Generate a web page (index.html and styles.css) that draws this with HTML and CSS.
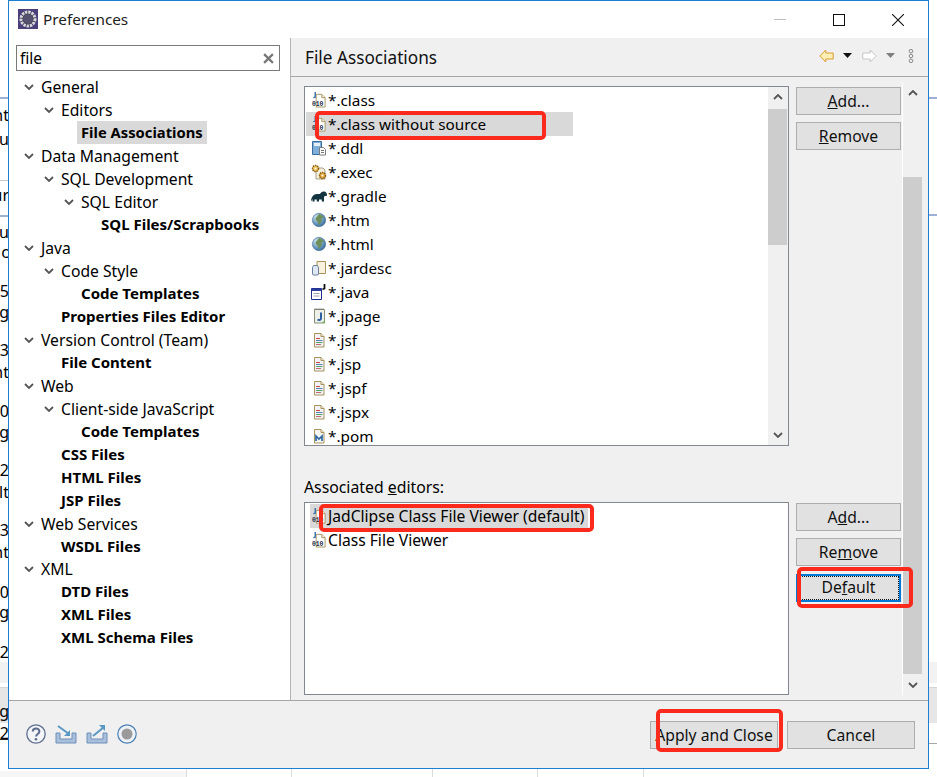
FILE: index.html
```html
<!DOCTYPE html>
<html lang="en">
<head>
<meta charset="utf-8">
<title>Preferences</title>
<link rel="stylesheet" href="styles.css">
</head>
<body>
<svg class="defs" width="0" height="0" aria-hidden="true">
  <defs>
    <radialGradient id="globe" cx="0.35" cy="0.3" r="0.8"><stop offset="0" stop-color="#dbe9f4"/><stop offset="0.55" stop-color="#6d9cc4"/><stop offset="1" stop-color="#35648f"/></radialGradient>
    <symbol id="chev-d" viewBox="0 0 10 6"><path d="M1 1l4 4 4-4" fill="none" stroke="#555" stroke-width="1.8"/></symbol>
    <symbol id="chev-u" viewBox="0 0 10 6"><path d="M1 5l4-4 4 4" fill="none" stroke="#555" stroke-width="1.8"/></symbol>
    <symbol id="i-class" viewBox="0 0 17 17">
      <path d="M5.500 2.500h6l3.500 3.500v10h-9.500z" fill="#fff" stroke="#a8935f"/><path d="M11.500 2.500v3.500h3.500" fill="#f3e9c8" stroke="#a8935f"/>
      <path d="M4.500 0v5.500l-2 .5" fill="none" stroke="#3a6ea8" stroke-width="1.500"/>
      <text class="ctext" x="1" y="14.500">010</text>
    </symbol>
    <symbol id="i-ddl" viewBox="0 0 16 16">
      <path d="M1.500 1.500h9v13h-9z" fill="#7fb0dc" stroke="#3b6d9c"/><rect x="3" y="3" width="6" height="3" fill="#e6f0f8"/>
      <path d="M8.500 7.500h4l2 2v5.500h-6z" fill="#fff" stroke="#7b7b7b"/><path d="M10 10.500h3M10 12.500h3" stroke="#777"/>
    </symbol>
    <symbol id="i-exec" viewBox="0 0 16 16">
      <path d="M5 4h7l2 2v9H5z" fill="#f5efd9" stroke="#a8a08a"/>
      <circle cx="4.500" cy="4.500" r="3" fill="#f1c55b" stroke="#8a5f12" stroke-width="1.500" stroke-dasharray="1.500 .7"/><circle cx="4.500" cy="4.500" r="1" fill="#fff"/>
      <circle cx="11.500" cy="11.500" r="3" fill="#e8aa3e" stroke="#8a5f12" stroke-width="1.500" stroke-dasharray="1.500 .7"/><circle cx="11.500" cy="11.500" r="1" fill="#fff"/>
    </symbol>
    <symbol id="i-gradle" viewBox="0 0 16 16"><path d="M0 13.500c0-4 2.500-7.500 6-7.500h3c.8-2 3-3 4.500-2.400 1.500.5 2.500 1.700 2.500 3.300 0 1-1 1.300-2 .8-.6.3-1 1-1 1.800v4h-2.200v-2H8v2H5.800v-2H3.500v2H1.500v-2.500c-.5.700-1 1.500-1.500 2.500z" fill="#12333f"/></symbol>
    <symbol id="i-globe" viewBox="0 0 16 16"><circle cx="8" cy="8" r="6.700" fill="url(#globe)" stroke="#4a7394" stroke-width=".6"/><path d="M8 2c2 .5 4 1.500 5 3.500-1 .5-2 .3-2.500 1.500-.3 1 1 2-.2 3-1 1-1.500 2.500-2.300 3-.7-1-.7-2.500-1.500-3.500-1-1-2-1.500-2-3C5 5 7 4 8 2z" fill="#6f8f5a"/></symbol>
    <symbol id="i-jar" viewBox="0 0 16 16"><path d="M6 1.500h8.500v12H6z" fill="#f7f1dd" stroke="#a8935f"/><path d="M1.500 8c0-1 .8-2 1-2.500h4c.2.500 1 1.500 1 2.500v6c0 .6-.5 1-1 1h-4c-.5 0-1-.4-1-1z" fill="#dfe8f4" stroke="#6b7f9c"/></symbol>
    <symbol id="i-java" viewBox="0 0 16 16"><path d="M.5 4.500h10v11H.5z" fill="#fff" stroke="#1d2c8c"/><rect x="1" y="4.500" width="9.500" height="2.500" fill="#2a3a9e"/><path d="M2.500 9.500h6M2.500 12h6" stroke="#9aa0b5"/><path d="M13.500 0v4.500l-2 1" fill="none" stroke="#111" stroke-width="1.800"/></symbol>
    <symbol id="i-jpage" viewBox="0 0 16 16"><path d="M3.500 1.500h10v13.500h-10z" fill="#eef1e9" stroke="#8a8f78"/><path d="M3.500 1h10" stroke="#555" stroke-dasharray="1 1"/><path d="M10 4.500v6c0 1.500-2 2-3.500 1" fill="none" stroke="#2f5fa0" stroke-width="2"/><path d="M11 15l3-3v3z" fill="#6eaa5a"/></symbol>
    <symbol id="i-jsf" viewBox="0 0 16 16"><path d="M3.500 1.500h6.500l3 3v10.500h-9.500z" fill="#f0f2f6" stroke="#a8935f"/><path d="M10 1.500v3h3" fill="#f3e9c8" stroke="#a8935f"/><path d="M5 6.500h4" stroke="#c44"/><path d="M5 8.500h6.500" stroke="#5a7fb5"/><path d="M5 10.500h6.500" stroke="#5aa06a"/><path d="M5 12.500h5" stroke="#c46a6a"/></symbol>
    <symbol id="i-pom" viewBox="0 0 16 16"><path d="M3.500 1.500h6.500l3 3v10.500h-9.500z" fill="#f6f6f2" stroke="#a8935f"/><path d="M10 1.500v3h3" fill="#f3e9c8" stroke="#a8935f"/><path d="M5 13V8l3 3 3-3v5" fill="none" stroke="#2e6aa8" stroke-width="1.700"/></symbol>
  </defs>
</svg>

<div class="desk">
  <div class="band-a"></div><div class="band-b"></div><div class="rule-l"></div><div class="rule-r"></div>
  <div class="hl hl-1"></div><div class="hl hl-2"></div><div class="hl hl-3"></div><div class="hl hl-4"></div><div class="hl hl-5"></div>
  <div class="foot-band"></div><div class="ticks"><i></i><i></i><i></i><i></i><i></i></div>
  <div class="frags">
    <span>nt</span><span>ou</span><span>ur</span><span>su</span><span>c</span><span>5</span><span>g</span><span>3</span><span>nt</span><span>0</span><span>ng</span><span>2</span><span>lt</span><span>3</span><span>nt</span><span>0</span><span>ng</span><span>2</span><span>g</span><span>2</span>
  </div>
</div>

<div class="dialog">
  <header class="titlebar">
    <svg class="app-icon" viewBox="0 0 20 20"><rect width="20" height="20" fill="#4a3f78"/><circle cx="10" cy="10" r="7" fill="#3a3a48" stroke="#d8d8dc" stroke-width="3" stroke-dasharray="2.400 .9"/><circle cx="10" cy="10" r="5" fill="#55506e"/></svg>
    <span class="title">Preferences</span>
    <div class="winbtns">
      <svg class="wb" viewBox="0 0 12 12"><path d="M0 5.500h12" stroke="#bdbdbd"/></svg>
      <svg class="wb" viewBox="0 0 12 12"><rect x=".5" y=".5" width="11" height="11" fill="none" stroke="#111"/></svg>
      <svg class="wb" viewBox="0 0 12 12"><path d="M0 0l12 12M12 0L0 12" stroke="#111" stroke-width="1.100"/></svg>
    </div>
  </header>

  <div class="main">
    <aside class="nav">
      <div class="filter">
        <span class="filter-text">file</span>
        <svg class="filter-x" viewBox="0 0 10 10"><path d="M1 1l8 8M9 1l-8 8" stroke="#777" stroke-width="2"/></svg>
      </div>
      <ul class="tree">
        <li class="l0"><svg class="tw"><use href="#chev-d"/></svg>General</li>
        <li class="l1"><svg class="tw"><use href="#chev-d"/></svg>Editors</li>
        <li class="l2 leaf"><b class="sel">File Associations</b></li>
        <li class="l0"><svg class="tw"><use href="#chev-d"/></svg>Data Management</li>
        <li class="l1"><svg class="tw"><use href="#chev-d"/></svg>SQL Development</li>
        <li class="l2"><svg class="tw"><use href="#chev-d"/></svg>SQL Editor</li>
        <li class="l3 leaf"><b>SQL Files/Scrapbooks</b></li>
        <li class="l0"><svg class="tw"><use href="#chev-d"/></svg>Java</li>
        <li class="l1"><svg class="tw"><use href="#chev-d"/></svg>Code Style</li>
        <li class="l2 leaf"><b>Code Templates</b></li>
        <li class="l1 leaf"><b>Properties Files Editor</b></li>
        <li class="l0"><svg class="tw"><use href="#chev-d"/></svg>Version Control (Team)</li>
        <li class="l1 leaf"><b>File Content</b></li>
        <li class="l0"><svg class="tw"><use href="#chev-d"/></svg>Web</li>
        <li class="l1"><svg class="tw"><use href="#chev-d"/></svg>Client-side JavaScript</li>
        <li class="l2 leaf"><b>Code Templates</b></li>
        <li class="l1 leaf"><b>CSS Files</b></li>
        <li class="l1 leaf"><b>HTML Files</b></li>
        <li class="l1 leaf"><b>JSP Files</b></li>
        <li class="l0"><svg class="tw"><use href="#chev-d"/></svg>Web Services</li>
        <li class="l1 leaf"><b>WSDL Files</b></li>
        <li class="l0"><svg class="tw"><use href="#chev-d"/></svg>XML</li>
        <li class="l1 leaf"><b>DTD Files</b></li>
        <li class="l1 leaf"><b>XML Files</b></li>
        <li class="l1 leaf"><b>XML Schema Files</b></li>
      </ul>
    </aside>

    <section class="page">
      <div class="page-head">
        <h1>File Associations</h1>
        <div class="nav-tools">
          <svg class="arrow" viewBox="0 0 15 14"><path d="M.8 7l6-6v3h7.400v6H6.800v3z" fill="#fdeeb5" stroke="#dc9a30"/></svg>
          <svg class="drop" viewBox="0 0 9 5"><path d="M0 0h9L4.500 5z" fill="#111"/></svg>
          <svg class="arrow" viewBox="0 0 15 14"><path d="M14.200 7l-6-6v3H.8v6h7.400v3z" fill="#fff" stroke="#c6c6c6"/></svg>
          <svg class="drop drop-g" viewBox="0 0 9 5"><path d="M0 0h9L4.500 5z" fill="#808080"/></svg>
          <svg class="dots" viewBox="0 0 6 14"><g fill="none" stroke="#888"><circle cx="3" cy="2.200" r="1.800"/><circle cx="3" cy="7" r="1.800"/><circle cx="3" cy="11.800" r="1.800"/></g></svg>
        </div>
      </div>

      <div class="page-body">
        <div class="pane">
          <div class="split">
            <div class="list list-top">
              <ul class="rows">
                <li><svg class="ic"><use href="#i-class"/></svg>*.class</li>
                <li class="on"><svg class="ic"><use href="#i-class"/></svg>*.class without source</li>
                <li><svg class="ic"><use href="#i-ddl"/></svg>*.ddl</li>
                <li><svg class="ic"><use href="#i-exec"/></svg>*.exec</li>
                <li><svg class="ic"><use href="#i-gradle"/></svg>*.gradle</li>
                <li><svg class="ic"><use href="#i-globe"/></svg>*.htm</li>
                <li><svg class="ic"><use href="#i-globe"/></svg>*.html</li>
                <li><svg class="ic"><use href="#i-jar"/></svg>*.jardesc</li>
                <li><svg class="ic"><use href="#i-java"/></svg>*.java</li>
                <li><svg class="ic"><use href="#i-jpage"/></svg>*.jpage</li>
                <li><svg class="ic"><use href="#i-jsf"/></svg>*.jsf</li>
                <li><svg class="ic"><use href="#i-jsf"/></svg>*.jsp</li>
                <li><svg class="ic"><use href="#i-jsf"/></svg>*.jspf</li>
                <li><svg class="ic"><use href="#i-jsf"/></svg>*.jspx</li>
                <li><svg class="ic"><use href="#i-pom"/></svg>*.pom</li>
              </ul>
              <div class="vbar vbar-list">
                <svg class="va"><use href="#chev-u"/></svg>
                <div class="track track-list"><div class="thumb thumb-list"></div></div>
                <svg class="va"><use href="#chev-d"/></svg>
              </div>
            </div>
            <div class="btns">
              <button class="btn"><u>A</u>dd...</button>
              <button class="btn"><u>R</u>emove</button>
            </div>
          </div>

          <div class="assoc-label">Associated <u>e</u>ditors:</div>

          <div class="split">
            <div class="list list-bot">
              <ul class="rows rows-bot">
                <li class="on"><svg class="ic"><use href="#i-class"/></svg>JadClipse Class File Viewer (default)</li>
                <li><svg class="ic"><use href="#i-class"/></svg>Class File Viewer</li>
              </ul>
            </div>
            <div class="btns btns-bot">
              <button class="btn">A<u>d</u>d...</button>
              <button class="btn">Re<u>m</u>ove</button>
              <button class="btn btn-focus"><span class="focus-in">De<u>f</u>ault</span></button>
            </div>
          </div>
        </div>

        <div class="vbar vbar-outer">
          <svg class="va"><use href="#chev-u"/></svg>
          <div class="track track-outer"><div class="thumb thumb-outer"></div></div>
          <svg class="va"><use href="#chev-d"/></svg>
        </div>
      </div>
    </section>
  </div>

  <footer class="foot">
    <div class="foot-icons">
      <svg class="fi fi-help" viewBox="0 0 20 20"><circle cx="10" cy="10" r="9.200" fill="#f4f5f8" stroke="#5d6d8e" stroke-width="1.300"/><path d="M6.800 7.500c0-4 6.600-4 6.600 0 0 2.500-3.300 2.500-3.300 5" fill="none" stroke="#5d6d8e" stroke-width="2"/><circle cx="10" cy="15.300" r="1.300" fill="#5d6d8e"/></svg>
      <svg class="fi fi-box" viewBox="0 0 22 20"><path d="M1 9h4v6h12V9h4v10H1z" fill="#a9c0dd" stroke="#6e8fb8"/><path d="M3 2l11 8" stroke="#5a98c4" stroke-width="2"/><path d="M9 12h6V6z" fill="#5a98c4"/></svg>
      <svg class="fi fi-box" viewBox="0 0 22 20"><path d="M1 9h4v6h12V9h4v10H1z" fill="#a9c0dd" stroke="#6e8fb8"/><path d="M7 12l11-9" stroke="#5a98c4" stroke-width="2"/><path d="M13 1h6v6z" fill="#5a98c4"/></svg>
      <svg class="fi fi-rec" viewBox="0 0 20 20"><circle cx="10" cy="10" r="9.200" fill="#eef2f8" stroke="#4a80b5" stroke-width="1.200"/><circle cx="10" cy="10" r="5.500" fill="#9a9a9a"/></svg>
    </div>
    <div class="foot-btns">
      <button class="btn btn-foot">Apply and Close</button>
      <button class="btn btn-foot">Cancel</button>
    </div>
  </footer>

  <div class="mark mark-1"></div>
  <div class="mark mark-2"></div>
  <div class="mark mark-3"></div>
  <div class="mark mark-4"></div>
</div>
</body>
</html>
```

FILE: styles.css
```css
* { box-sizing: border-box; }
html, body { margin: 0; padding: 0; }
body {
  position: relative;
  width: 937px;
  height: 777px;
  overflow: hidden;
  background: #fff;
  color: #000;
  font-family: "Noto Sans", "Open Sans", sans-serif;
  font-size: 15.300px;
}
.defs { position: absolute; }
ul { list-style: none; margin: 0; padding: 0; }
b { font-weight: 700; }
.ctext { font-family: "Liberation Mono", monospace; font-size: 6.800px; font-weight: 700; fill: #24304a; }

/* windows behind the dialog */
.desk { position: absolute; inset: 0; }
.desk > div { position: absolute; }
.hl { height: 2px; background: #9db1d6; }
.hl-1 { left: 0; width: 10px; top: 97px; }
.hl-2 { left: 0; width: 10px; top: 180px; height: 1px; background: #c8c8c8; }
.hl-3 { left: 0; width: 10px; top: 215px; }
.hl-4 { right: 0; width: 10px; top: 97px; }
.hl-5 { right: 0; width: 10px; top: 214px; }
.band-a { left: 0; right: 0; top: 662px; height: 21px; background: #f2f2f2; }
.band-b { left: 0; right: 0; top: 687px; height: 36px; background: #e6e6e6; border-top: 1px solid #d4d4d4; }
.rule-l { left: 0; width: 10px; top: 739px; height: 1px; background: #222; }
.rule-r { right: 0; width: 10px; top: 743px; height: 1px; background: #a8a8a8; }
.foot-band { left: 0; width: 186px; top: 771px; height: 6px; background: #f6f6f6; }
.ticks { left: 0; right: 0; top: 769px; height: 8px; }
.ticks i { position: absolute; top: 0; bottom: 0; width: 1px; background: #dcdcdc; }
.ticks i:nth-child(1) { left: 186px; }
.ticks i:nth-child(2) { left: 291px; }
.ticks i:nth-child(3) { left: 432px; }
.ticks i:nth-child(4) { left: 537px; }
.ticks i:nth-child(5) { left: 643px; }
.frags {
  left: 0; top: 0; width: 9px;
  display: grid;
  font-size: 16px;
  grid-template-columns: 9px;
  grid-template-rows: 125px 24px 56px 37px 20px 39px 21px 38px 22px 39px 21px 38px 22px 38px 22px 40px 20px 40px 59px 22px;
}
.frags span { display: flex; justify-content: flex-end; align-self: end; min-width: 0; height: 20px; line-height: 20px; white-space: nowrap; }

/* dialog */
.dialog {
  position: absolute;
  left: 8px; top: 0;
  width: 921px; height: 769px;
  display: flex;
  flex-direction: column;
  background: #fff;
  border: 1px solid #1b7fd6;
}
.titlebar { flex: none; height: 37px; display: flex; align-items: center; padding: 0 0 0 9px; }
.app-icon { width: 20px; height: 20px; flex: none; margin-top: -1px; }
.title { margin: -2px 0 0 5px; color: #222; }
.winbtns { margin-left: auto; display: flex; align-items: center; gap: 47px; padding-right: 24px; }
.wb { width: 12px; height: 12px; display: block; }
.main { flex: 1; display: flex; min-height: 0; }

/* tree */
.nav { flex: none; width: 282px; padding: 7px 10px 0 7px; border-right: 1px solid #b4b4b4; }
.filter { height: 26px; width: 264px; border: 1px solid #7a7a7a; display: flex; align-items: center; padding: 0 5px 0 3px; }
.filter-text { font-size: 15.500px; }
.filter-x { width: 11px; height: 11px; margin-left: auto; }
.tree { margin-top: 5px; font-size: 15.700px; }
.tree li { height: 22.960px; display: flex; align-items: center; white-space: nowrap; }
.tree b { font-size: 15px; margin-top: -2px; }
.tree .sel { font-size: 14.750px; }
.tw { width: 10px; height: 6px; flex: none; margin-right: 7px; }
.l0 { padding-left: 8px; }
.l1 { padding-left: 28px; }
.l2 { padding-left: 48px; }
.l1.leaf { padding-left: 45px; }
.l2.leaf { padding-left: 65px; }
.l3.leaf { padding-left: 85px; }
.sel { background: #d9d9d9; padding: 0 4px; margin-left: -4px; line-height: 23px; }

/* right page */
.page { flex: 1; min-width: 0; background: #f0f0f0; display: flex; flex-direction: column; }
.page-head { flex: none; height: 39px; border-bottom: 1px solid #a5a5a5; display: flex; align-items: center; padding: 0 14px; }
h1 { margin: 0; font-weight: 400; font-size: 17.200px; color: #111; }
.nav-tools { margin: -3px 0 0 auto; display: flex; align-items: center; }
.arrow { width: 15px; height: 14px; }
.drop { width: 9px; height: 5px; margin: 0 10px 0 9px; }
.drop-g { margin-right: 13px; }
.dots { width: 6px; height: 14px; }

.page-body { flex: 1; min-height: 0; display: flex; padding: 6px 6px 5px 13px; }
.pane { width: 599px; flex: none; padding-top: 3px; display: flex; flex-direction: column; border-right: 1px solid #fff; }
.split { display: grid; grid-template-columns: 485px 105px; column-gap: 7px; }
.list { background: #fff; border: 1px solid #828790; display: flex; overflow: hidden; }
.list-top { height: 360px; }
.list-bot { height: 193px; }
.rows { flex: 1; min-width: 0; padding: 1px 0 0 1px; }
.rows li { height: 24px; width: 267px; display: flex; align-items: center; padding-left: 5px; white-space: nowrap; line-height: 24px; }
.rows .on { background: #d9d9d9; }
.ic { width: 16px; height: 16px; flex: none; margin-right: 1px; }
.rows-bot { padding: 1px 0 0 5px; font-size: 15.650px; }
.rows-bot li { width: max-content; padding: 0 4px 0 1px; }
.assoc-label { height: 56px; padding-top: 30px; line-height: 22px; font-size: 15.800px; }

.btns { display: flex; flex-direction: column; gap: 7px; padding-top: 1px; }
.btns-bot .btn:last-child { margin-top: 1px; }
.btn {
  display: block;
  height: 28px;
  padding: 0;
  border: 1px solid #adadad;
  background: #e1e1e1;
  font: inherit;
  font-size: 15.700px;
  color: #111;
  line-height: 24px;
}
.btn-focus { border: 2px solid #0078d7; }
.focus-in { display: block; height: 100%; border: 1px dotted #111; line-height: 20px; }

.vbar { display: flex; flex-direction: column; background: #f0f0f0; }
.vbar-list { width: 20px; flex: none; }
.vbar-outer { width: 19px; flex: none; }
.va { width: 10px; height: 6px; flex: none; align-self: center; margin: 7px 0; }
.track { flex: 1; }
.track-list { padding: 2px 1px 0 0; }
.thumb { background: #cdcdcd; }
.thumb-list { height: 136px; }
.track-outer { padding-top: 74px; }
.thumb-outer { height: 497px; }

/* footer */
.foot { flex: none; height: 68px; background: #f0f0f0; border-top: 1px solid #a5a5a5; display: flex; justify-content: space-between; padding: 20px 13px 0 17px; }
.foot-icons { display: flex; align-items: center; height: 25px; gap: 9px; }
.fi { flex: none; }
.fi-help, .fi-rec { width: 20px; height: 20px; }
.fi-box { width: 22px; height: 20px; }
.foot-btns { display: flex; gap: 9px; }
.btn-foot { width: 128px; height: 28px; }

/* red annotations drawn on the screenshot */
.mark { position: absolute; border: 4px solid #fb2a1c; border-radius: 5px; }
.mark-1 { left: 306px; top: 110px; width: 231px; height: 29px; }
.mark-2 { left: 310px; top: 503px; width: 275px; height: 28px; }
.mark-3 { left: 788px; top: 566px; width: 116px; height: 41px; }
.mark-4 { left: 647px; top: 708px; width: 127px; height: 43px; }
```
